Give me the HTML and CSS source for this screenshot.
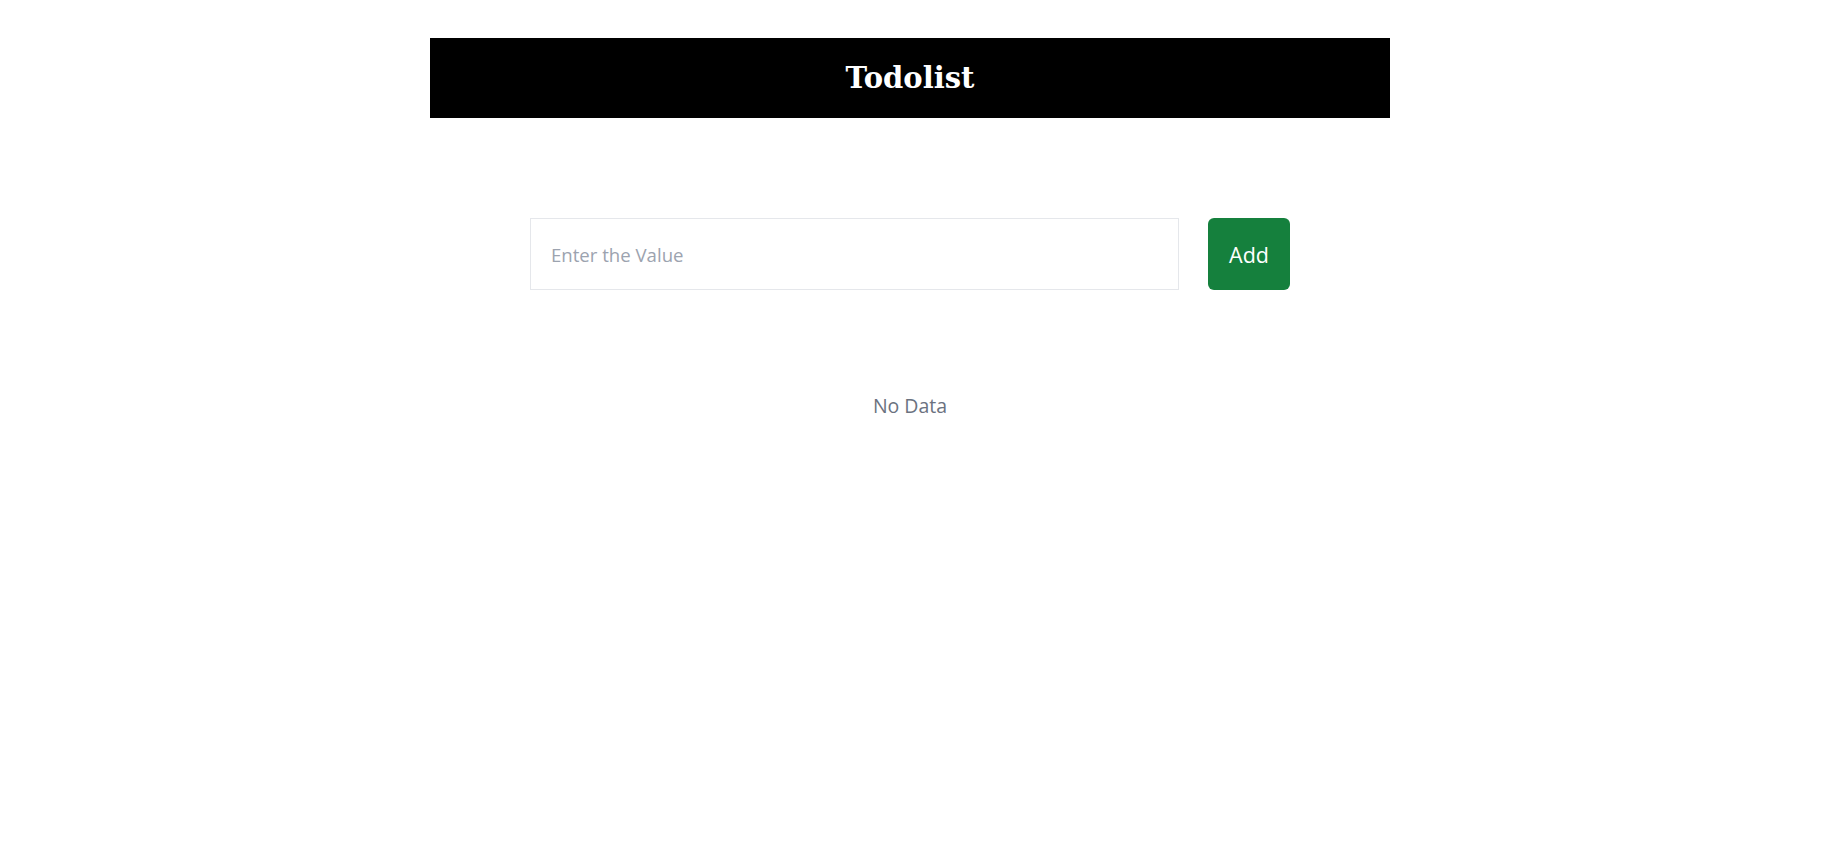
FILE: index.html
```html
<!DOCTYPE html>
<html lang="en">
<head>
<meta charset="utf-8">
<title>Todolist</title>
<link rel="stylesheet" href="styles.css">
</head>
<body>
<div class="app">
  <header class="header"><h1 class="title">Todolist</h1></header>
  <main class="content">
    <form class="add-form" onsubmit="return false">
      <input class="field" type="text" placeholder="Enter the Value">
      <button class="add-btn" type="submit">Add</button>
    </form>
    <p class="empty">No Data</p>
  </main>
</div>
</body>
</html>
```
FILE: styles.css
```css
* { box-sizing: border-box; }
html, body { margin: 0; padding: 0; background: #fff; }
body { font-family: "Open Sans", "Noto Sans", sans-serif; }
.app {
  width: 985px;
  margin: 0 auto;
  padding: 38px 25px 0 0;
}
.header {
  height: 80px;
  background: #000;
  display: flex;
  align-items: center;
  justify-content: center;
}
.title {
  margin: 0;
  color: #fff;
  font-family: "DejaVu Serif", serif;
  font-weight: bold;
  font-size: 29px;
  line-height: 1;
}
.content {
  display: flex;
  flex-direction: column;
  align-items: center;
  padding-top: 100px;
}
.add-form {
  display: flex;
  gap: 29px;
}
.field {
  width: 649px;
  height: 72px;
  border: 1px solid #e5e7eb;
  border-radius: 0;
  padding: 0 20px;
  font-family: inherit;
  font-size: 18.6px;
  color: #111827;
  outline: none;
}
.field::placeholder { color: #9ca3af; }
.add-btn {
  width: 82px;
  height: 72px;
  border: none;
  border-radius: 6px;
  background: #15803d;
  color: #fff;
  font-family: inherit;
  font-size: 21.5px;
  cursor: pointer;
}
.empty {
  margin: 103px 0 0;
  color: #6b7280;
  font-size: 19.5px;
  line-height: 26px;
}
```
